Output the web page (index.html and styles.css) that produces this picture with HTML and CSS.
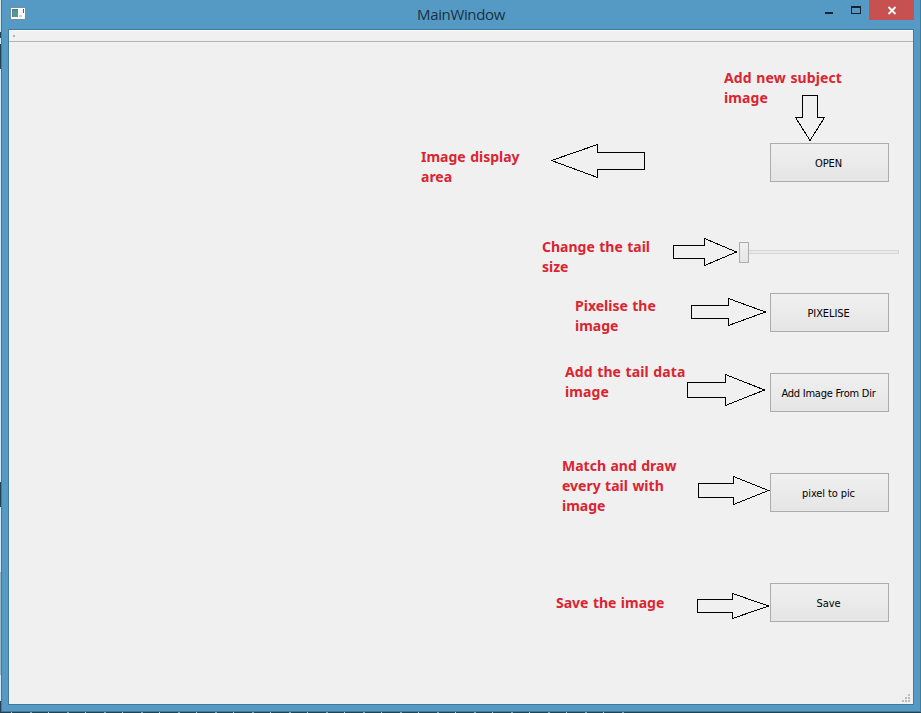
FILE: index.html
```html
<!DOCTYPE html>
<html lang="en">
<head>
<meta charset="utf-8">
<title>MainWindow</title>
<link rel="stylesheet" href="styles.css">
</head>
<body>
<div class="window">
  <header class="titlebar">
    <svg class="app-icon" width="16" height="13" viewBox="0 0 16 13" shape-rendering="crispEdges">
      <rect width="16" height="13" fill="#728f9e"/><rect x="1" y="1" width="14" height="11" fill="#fafafa"/>
      <rect x="2" y="2" width="6" height="8" fill="#577da0"/><rect x="3" y="4" width="5" height="6" fill="#509b83"/>
      <rect x="13" y="2" width="1" height="4" fill="#436775"/><rect x="9" y="8" width="3" height="2" fill="#ccd4d9"/>
    </svg>
    <h1 class="title">MainWindow</h1>
    <div class="controls">
      <svg width="71" height="20" viewBox="0 0 71 20" shape-rendering="crispEdges">
        <rect x="27" y="12" width="8" height="2" fill="#16232b"/>
        <path d="M53 6h10v8h-10zM54 8v5h8v-5z" fill="#16232b" fill-rule="evenodd"/>
      </svg>
      <div class="close"><svg width="45" height="20" viewBox="0 0 45 20"><path d="M19.500 7l7 7M26.500 7l-7 7" stroke="#fff" stroke-width="1.800"/></svg></div>
    </div>
  </header>
  <main class="client">
    <div class="menubar"><span class="dot"></span></div>

    <section class="row open-row">
      <p class="note note-display">Image display<br>area</p>
      <svg class="arrow arrow-display" width="95" height="35" viewBox="0 0 95 35"><path d="M.5 17.500L46.500 1.500V9.500H93.500V26.500H46.500V34.500Z"/></svg>
      <div class="open-group">
        <p class="note">Add new subject<br>image</p>
        <svg class="arrow arrow-down" width="31" height="46" viewBox="0 0 31 46"><path d="M7.500.5H22.500V22.500H29.500L15 45.500L.5 22.500H7.500Z"/></svg>
        <button class="btn"><span class="t-open">OPEN</span></button>
      </div>
    </section>

    <section class="row slider-row">
      <p class="note">Change the tail<br>size</p>
      <svg class="arrow" width="65" height="28" viewBox="0 0 65 28"><path d="M.5 7.500H31.500V.5L63.500 14L31.500 27.500V20.500H.5Z"/></svg>
      <div class="slider"><span class="thumb"></span><span class="track"></span></div>
    </section>

    <section class="row pixelise-row">
      <p class="note">Pixelise the<br>image</p>
      <svg class="arrow" width="76" height="28" viewBox="0 0 76 28"><path d="M.5 7.500H37.500V.5L74.500 14L37.500 27.500V20.500H.5Z"/></svg>
      <button class="btn"><span class="t-pixelise">PIXELISE</span></button>
    </section>

    <section class="row add-row">
      <p class="note">Add the tail data<br>image</p>
      <svg class="arrow" width="79" height="32" viewBox="0 0 79 32"><path d="M.5 8.500H38.500V.5L77.500 16L38.500 31.500V23.500H.5Z"/></svg>
      <button class="btn"><span class="t-add">Add Image From Dir</span></button>
    </section>

    <section class="row match-row">
      <p class="note">Match and draw<br>every tail with<br>image</p>
      <svg class="arrow" width="72" height="29" viewBox="0 0 72 29"><path d="M.5 7.500H35.500V.5L70.500 14.500L35.500 28.500V21.500H.5Z"/></svg>
      <button class="btn"><span class="t-pic">pixel to pic</span></button>
    </section>

    <section class="row save-row">
      <p class="note">Save the image</p>
      <svg class="arrow" width="73" height="26" viewBox="0 0 73 26"><path d="M.5 6.500H35.500V.5L71.500 13L35.500 25.500V19.500H.5Z"/></svg>
      <button class="btn"><span class="t-save">Save</span></button>
    </section>

    <svg class="grip" width="8" height="8" viewBox="0 0 8 8" shape-rendering="crispEdges" fill="#bcbcbc"><path d="M6 0h2v2h-2zM3 3h2v2h-2zM6 3h2v2h-2zM0 6h2v2h-2zM3 6h2v2h-2zM6 6h2v2h-2z"/></svg>
  </main>
</div>
</body>
</html>
```
FILE: styles.css
```css
* { box-sizing: border-box; }
body {
  margin: 0;
  width: 921px;
  height: 713px;
  overflow: hidden;
  padding-left: 1px;
  background:
    linear-gradient(#27424f, #27424f) 0 44px / 1px 25px no-repeat,
    linear-gradient(#27424f, #27424f) 0 32px / 1px 6px no-repeat,
    linear-gradient(#27424f, #27424f) 0 482px / 1px 25px no-repeat,
    linear-gradient(#9bb7c0, #9bb7c0) 0 572px / 1px 103px no-repeat,
    linear-gradient(#27424f, #27424f) 0 701px / 1px 12px no-repeat,
    repeating-linear-gradient(90deg, #23414f 0 11px, #b9ccd4 11px 12px, #23414f 12px 30px, #8aa4ae 30px 32px, #23414f 32px 37px) 0 712px / 635px 1px no-repeat,
    linear-gradient(#23414f, #23414f) 0 712px / 921px 1px no-repeat,
    #d3e8ee;
}
.window {
  width: 920px;
  height: 712px;
  border: 1px solid #427b9a;
  border-top: 0;
  background: #559ac5;
  display: flex;
  flex-direction: column;
  padding: 0 6px 6px;
}
.titlebar {
  height: 29px;
  flex: none;
  display: grid;
  grid-template-columns: 116px 1fr 116px;
  align-items: start;
}
.app-icon { margin: 7px 0 0 2px; }
.title {
  margin: 4px 0 0;
  font: 400 15px/21px "Open Sans", "Noto Sans", sans-serif;
  letter-spacing: -0.35px;
  text-align: center;
  color: #19323f;
}
.controls { display: flex; }
.controls svg { display: block; }
.close { width: 45px; height: 20px; background: #c75050; }
.client {
  width: 906px;
  height: 676px;
  border: 1px solid #427b9a;
  background: #f0f0f0;
  display: flex;
  flex-direction: column;
}
.menubar {
  height: 12px;
  flex: none;
  border-top: 1px solid #fff;
  border-bottom: 1px solid #b4b4b4;
  padding: 4px 4px;
}
.dot { display: block; width: 2px; height: 2px; background: #b0b0b0; }
.row {
  display: flex;
  align-items: flex-start;
  justify-content: flex-end;
  flex: none;
  padding-right: 24px;
}
.note {
  margin: 0;
  white-space: nowrap;
  font: 700 14px/20px "Noto Sans", "Open Sans", sans-serif;
  word-spacing: 0.8px;
  color: #da2530;
}
.arrow {
  flex: none;
  display: block;
  fill: none;
  stroke: #000;
  stroke-width: 1;
  shape-rendering: crispEdges;
}
.btn {
  width: 119px;
  height: 39px;
  flex: none;
  display: block;
  border: 1px solid #acacac;
  border-radius: 0;
  padding: 2px 2px 0 0;
  background: linear-gradient(#f0f0f0, #e5e5e5);
  font: 11px/15px "DejaVu Sans Condensed", "DejaVu Sans", sans-serif;
  font-stretch: condensed;
  letter-spacing: -0.1px;
  color: #000;
  text-align: center;
}
.btn span { white-space: nowrap; }
.btn .t-add { letter-spacing: -0.24px; }

.open-row { height: 196px; padding-top: 26px; }
.note-display { width: 130px; margin-top: 79px; }
.arrow-display { margin-top: 75px; }
.open-group { width: 165px; margin-left: 78px; }
.open-group .note { letter-spacing: 0.12px; }
.arrow-down { margin: -13px 0 2px 71px; }
.open-group .btn { margin-left: 46px; }

.slider-row { height: 55px; padding-right: 14px; }
.slider-row .note { width: 131px; margin-top: -1px; }
.slider { width: 160px; height: 21px; margin: 4px 0 0 1px; display: flex; align-items: flex-start; }
.thumb { width: 10px; height: 21px; border: 1px solid #acacac; background: linear-gradient(#f0f0f0, #e5e5e5); }
.track { flex: 1; height: 4px; margin-top: 8px; border: 1px solid #d6d6d6; border-left: 0; background: #e7eaea; }

.pixelise-row { height: 80px; }
.pixelise-row .note { width: 116px; margin-top: 3px; }
.pixelise-row .arrow { margin: 5px 3px 0 0; }

.add-row { height: 100px; }
.add-row .note { width: 122px; margin-top: -11px; letter-spacing: 0.1px; }
.add-row .arrow { margin: 1px 4px 0 0; }

.match-row { height: 110px; }
.match-row .note { width: 136px; margin-top: -17px; }
.match-row .arrow { margin-top: 3px; }

.save-row { height: 111px; }
.save-row .note { width: 141px; margin-top: 10px; }
.save-row .arrow { margin-top: 10px; }

.grip { align-self: flex-end; margin-right: 3px; }
```
